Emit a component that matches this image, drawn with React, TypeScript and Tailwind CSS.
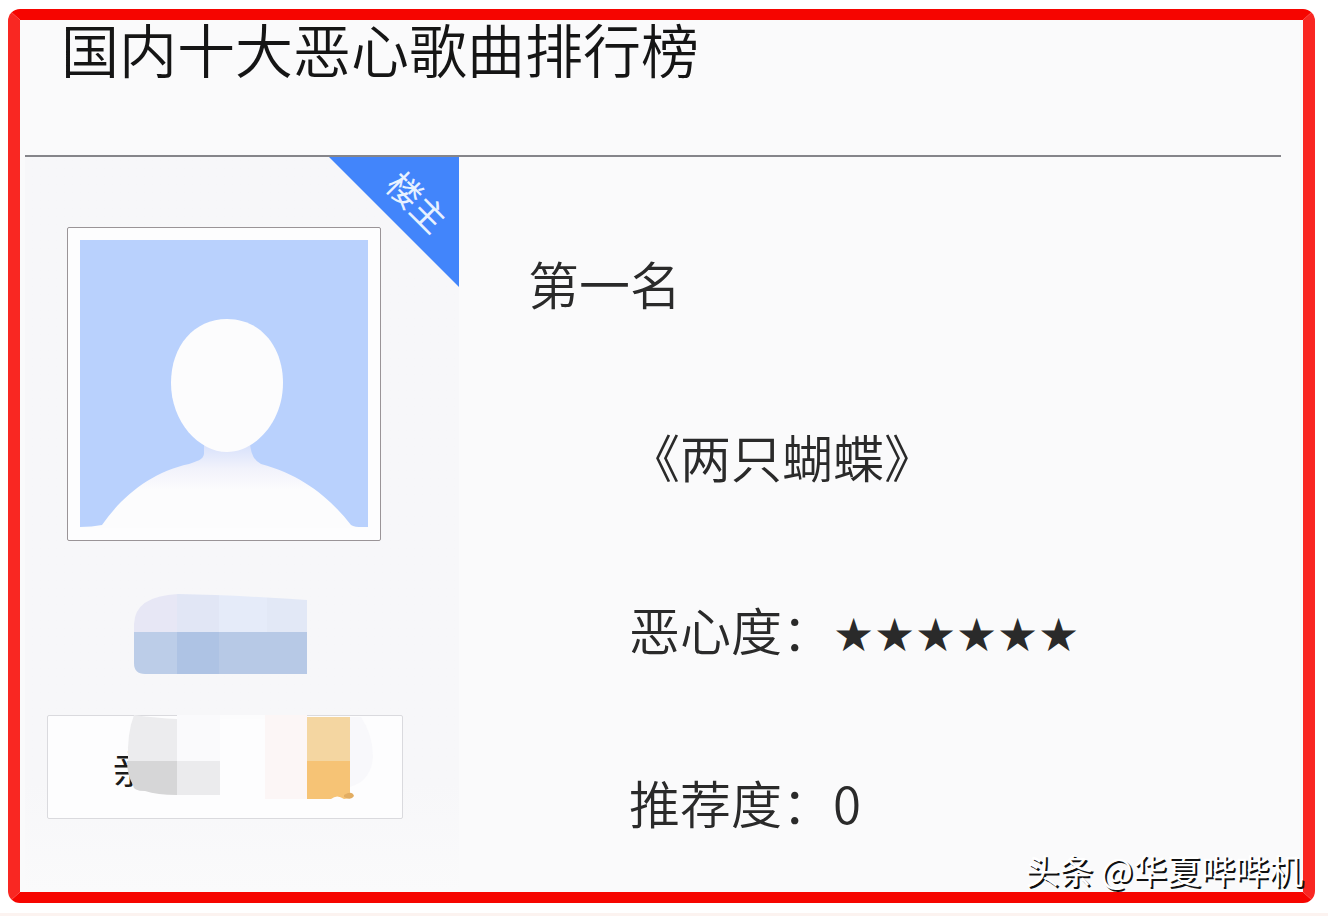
import type { ReactNode } from 'react';

const Avatar = () => (
  <div className="ml-[42px] w-[314px] rounded-xs border border-[#9a9497] bg-[#fdfdfe] p-3">
    <svg viewBox="0 0 288 288" className="block w-full" role="img" aria-label="头像">
      <defs>
        <linearGradient id="body" x1="0" y1="206" x2="0" y2="250" gradientUnits="userSpaceOnUse">
          <stop offset="0" stopColor="#d9e2fb" />
          <stop offset="0.5" stopColor="#f1f2fb" />
          <stop offset="1" stopColor="#fcfcfd" />
        </linearGradient>
      </defs>
      <rect width="288" height="287" fill="#b9d1fd" />
      <path
        d="M124 200V214C123 220 117 221 109 224C72 232 43 255 22 285Q12 287 0 287V288H288V287Q276 288 271 285C250 258 222 235 181 224Q170 219 170 200Z"
        fill="url(#body)"
      />
      <path
        d="M147 79C180 79 203 106 203 143C203 182 175 212 147 212C119 212 91 182 91 143C91 106 114 79 147 79Z"
        fill="#fcfcfd"
      />
    </svg>
  </div>
);

const HostBadge = () => (
  <svg viewBox="0 0 130 130" className="absolute top-0 right-0 w-[130px] overflow-visible">
    <path d="M0 0H130V130Z" fill="#4285fb" />
    <text
      x="89"
      y="44"
      transform="rotate(45 89 44)"
      textAnchor="middle"
      dominantBaseline="central"
      fontSize="34"
      fontWeight="400"
      fill="#e8f2ff"
    >
      楼主
    </text>
  </svg>
);

const UserName = () => (
  <svg viewBox="0 0 173 80" className="mt-[53px] ml-[109px] block w-[173px]">
    <clipPath id="name">
      <path d="M0 30Q1 2 44 0Q100 1 173 6V80H11Q0 80 0 69Z" />
    </clipPath>
    <g clipPath="url(#name)">
      <rect width="43" height="38" fill="#e7e7f5" />
      <rect x="43" width="42" height="38" fill="#e1e6f5" />
      <rect x="85" width="48" height="38" fill="#e5ebf9" />
      <rect x="133" width="40" height="38" fill="#e2e8f6" />
      <rect y="38" width="43" height="42" fill="#bccde8" />
      <rect x="43" y="38" width="42" height="42" fill="#aec3e4" />
      <rect x="85" y="38" width="88" height="42" fill="#b7c9e6" />
    </g>
  </svg>
);

const UserLevel = () => (
  <div className="relative mt-[41px] ml-[22px] flex h-[104px] w-[356px] items-center rounded-xs border border-[#dadade] bg-[#fdfdfe] pl-16">
    <span className="text-[38px] leading-[48px] font-normal text-[#1b1b1b]">亲</span>
    <svg viewBox="0 0 356 104" className="absolute -top-px -left-px w-[356px]">
      <path d="M87 0Q110 3 130 4V46H81Q80 18 87 0Z" fill="#ececee" />
      <path d="M80 46H130V80Q110 80 98 76Q86 76 86 70Q80 60 80 46Z" fill="#d6d6d7" />
      <rect x="130" width="43" height="46" fill="#fafafc" />
      <rect x="130" y="46" width="43" height="34" fill="#ebebed" />
      <rect x="173" width="45" height="4" fill="#fcfcfd" />
      <rect x="218" width="42" height="84" fill="#fcf6f6" />
      <rect x="260" y="2" width="43" height="44" fill="#f4d6a1" />
      <path d="M260 46H303V78Q308 80 304 83L297 84Q290 79 284 84H260Z" fill="#f6c375" />
      <path d="M297 80Q305 75 307 81Q304 86 297 82Z" fill="#e2ad62" />
      <path d="M303 2H314Q326 20 326 42Q324 66 303 72Z" fill="#f8f8fb" />
    </svg>
  </div>
);

const Line = ({ indent, children }: { indent?: boolean; children: ReactNode }) => (
  <p className={indent ? 'pl-[101px]' : undefined}>{children}</p>
);

export default function App() {
  return (
    <div className="flex min-h-screen flex-col border-b-3 border-[#fcf3f0] bg-white pt-[9px] pr-[13px] pb-[10px] pl-2 font-['Noto_Sans_CJK_SC',sans-serif]">
      <main className="relative flex grow flex-col rounded-xl border-x-12 border-y-11 border-x-[#f92722] border-y-[#f60500] bg-[#fafafb] pr-[22px] pl-[5px]">
        <header className="border-b-2 border-[#85858a] pb-[79px] pl-9">
          <h1 className="text-[58px] leading-[56px] font-[350] text-[#151515]">国内十大恶心歌曲排行榜</h1>
        </header>

        <div className="flex grow">
          <aside className="relative w-[434px] shrink-0 bg-linear-to-b from-[#f7f7f9] from-85% to-[#fafafb] pt-[70px]">
            <HostBadge />
            <Avatar />
            <UserName />
            <UserLevel />
          </aside>

          <article className="pt-10 pl-[69px] text-[51px] leading-[173px] font-[350] text-[#2a2a2a]">
            <Line>第一名</Line>
            <Line indent>《两只蝴蝶》</Line>
            <Line indent>
              恶心度：<span className="font-['DejaVu_Sans',sans-serif] text-[46px] leading-none">★★★★★★</span>
            </Line>
            <Line indent>推荐度：0</Line>
          </article>
        </div>

        <p className="absolute right-0 bottom-1 text-[34px] leading-[36px] font-normal text-white [text-shadow:2px_2px_0_#111111]">
          头条 @华夏哔哔机
        </p>
      </main>
    </div>
  );
}
